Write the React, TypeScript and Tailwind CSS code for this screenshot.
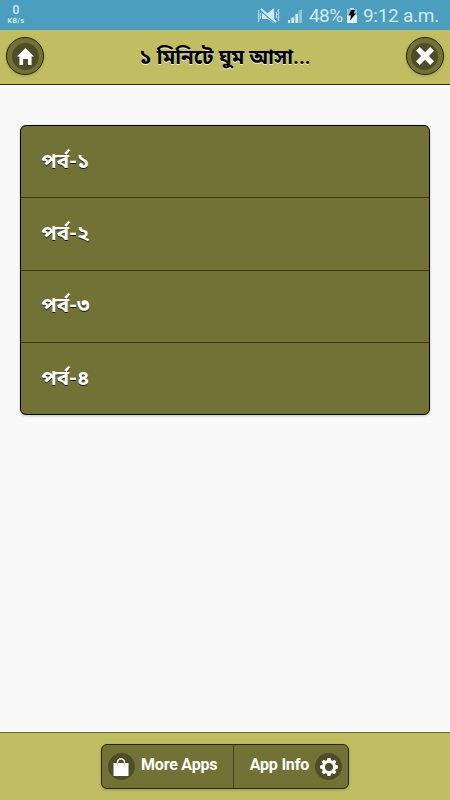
import type { ReactNode } from "react";

const episodes = ["পর্ব-১", "পর্ব-২", "পর্ব-৩", "পর্ব-৪"];
const teeth = [0, 45, 90, 135, 180, 225, 270, 315];

function HomeIcon() {
  return (
    <svg width="17" height="17" viewBox="0 0 14 14" fill="white">
      <path d="M7 0 0 7h2v7h3V9h4v5h3V7h2z" />
    </svg>
  );
}

function CloseIcon() {
  return (
    <svg width="18" height="18" viewBox="0 0 14 14" fill="white">
      <path d="m14 3-3-3-4 4-4-4-3 3 4 4-4 4 3 3 4-4 4 4 3-3-4-4z" />
    </svg>
  );
}

function BagIcon() {
  return (
    <svg className="-ml-px" width="16" height="18" viewBox="0 0 16 18" fill="none">
      <path d="M.5 5h15v13H.5z" fill="white" />
      <path d="M4.5 7.500V4.300a3.500 3.500 0 0 1 7 0v3.200" stroke="#bdbca6" strokeWidth="1" />
      <path d="M4.5 5V4.300a3.500 3.500 0 0 1 7 0V5" stroke="white" strokeWidth="1.2" />
    </svg>
  );
}

function GearIcon() {
  return (
    <svg width="18" height="18" viewBox="-9 -9 18 18">
      {teeth.map((angle) => (
        <path key={angle} d="M-2.2-6-1.5-8.9h3L2.2-6z" fill="white" transform={`rotate(${angle})`} />
      ))}
      <circle r="5.5" fill="none" stroke="white" strokeWidth="3" />
    </svg>
  );
}

function StatusBar() {
  return (
    <div className="flex h-[30px] items-center justify-between bg-[#4b9ebd] pl-[7px] pr-[11px] text-[#d2e9f2]">
      <div className="flex w-[18px] flex-col items-center">
        <span className="text-[12px] font-medium leading-[11px]">0</span>
        <span className="mt-px text-[7px] font-bold leading-[8px] tracking-[0.5px]">KB/s</span>
      </div>
      <div className="flex items-center">
        <svg className="mt-px" width="24" height="16" viewBox="0 0 24 16" fill="none" stroke="currentColor">
          <path d="M5 5h6l6-5v15l-6-4H5z" fill="currentColor" stroke="none" />
          <path d="M3 2.500l16 13" stroke="#4b9ebd" strokeWidth="1.5" />
          <path d="M4 1l15 13" strokeWidth="1.800" />
          <path d="M1 2l1 2-1 2 1 2-1 2 1 2-1 2M3.500 5l-.500 2 .500 2-.500 2M22 1l-1 2 1 2-1 2 1 2-1 2 1 2M19 4l1 2-1 2 1 2" strokeWidth="1" />
        </svg>
        <svg className="ml-[6px]" width="17" height="15" viewBox="0 0 17 15" fill="currentColor">
          <path d="M0 15 15 0v15z" opacity=".25" />
          <path d="M1 12h2v3H1zM4.500 9.500h2.500V15H4.500zM8.500 6H11v9H8.500z" />
          <path d="M12.500 2H15v13h-2.500z" opacity=".4" />
        </svg>
        <span className="ml-[5px] w-[36px] whitespace-nowrap pt-px text-[19px] leading-[30px] tracking-[-0.5px]">48%</span>
        <svg className="ml-[2px]" width="10" height="15" viewBox="0 0 10 15">
          <path d="M3 0h4v1h3v14H0V1h3z" fill="#e2f1f7" />
          <path d="M0 1h10v6H0z" fill="#8dc2d6" />
          <path d="M4 2h4L6.500 5.500H9l-6 7 1-5H1.500z" fill="black" />
        </svg>
        <span className="ml-[6px] whitespace-nowrap pt-px text-[19px] leading-[30px] tracking-[-0.25px]">9:12 a.m.</span>
      </div>
    </div>
  );
}

function RoundButton({ label, children }: { label: string; children: ReactNode }) {
  return (
    <button
      aria-label={label}
      className="flex size-[38px] shrink-0 items-center justify-center rounded-full border border-[#28260f] bg-[#737236] shadow-[0_1px_3px_rgba(0,0,0,0.2)]"
    >
      <span className="flex size-[27px] items-center justify-center rounded-full bg-[#4f4d27]">{children}</span>
    </button>
  );
}

export default function App() {
  return (
    <main className="flex h-[800px] w-[450px] flex-col overflow-hidden bg-[#f9f9f9] font-[Roboto,'Noto_Sans_Bengali','Noto_Sans',sans-serif]">
      <StatusBar />
      <header className="flex h-[55px] items-start justify-between border-b border-[#302a09] bg-[#c1bd63] px-[6px] pt-[7px]">
        <RoundButton label="Home">
          <HomeIcon />
        </RoundButton>
        <h1 className="flex h-[38px] items-center whitespace-nowrap pt-[2px] text-[20.500px] font-bold text-black [text-shadow:0_1px_0_#eee]">
          ১ মিনিটে ঘুম আসা...
        </h1>
        <RoundButton label="Close">
          <CloseIcon />
        </RoundButton>
      </header>

      <div className="flex-1 px-5 pt-10">
        <ul className="h-[290px] overflow-hidden rounded-[6px] border border-black bg-[#737236] shadow-[0_1px_3px_rgba(0,0,0,0.2)]">
          {episodes.map((episode) => (
            <li
              key={episode}
              className="flex h-[72.3px] items-center border-b border-[#3c3a18] pb-px pl-[20.500px] text-[20.500px] font-bold text-white [text-shadow:0_1px_0_#111] last:border-b-0"
            >
              {episode}
            </li>
          ))}
        </ul>
      </div>

      <footer className="flex h-[68px] justify-center border-t border-[#6d6a2f] bg-[#c1bd63] pt-[11px]">
        <div className="flex h-[45px] w-[248px] overflow-hidden rounded-[6px] border border-[#29270f] bg-[#737236] text-[16px] font-bold tracking-[-0.2px] text-white shadow-[0_1px_3px_rgba(0,0,0,0.2)] [text-shadow:0_1px_0_#111]">
          <button className="flex w-[132px] items-center border-r border-[#45431e] pl-[6px]">
            <span className="flex size-[27px] shrink-0 items-center justify-center rounded-full bg-[#4f4d27]">
              <BagIcon />
            </span>
            <span className="ml-[6px] whitespace-nowrap pb-[3px]">More Apps</span>
          </button>
          <button className="flex flex-1 items-center justify-end pr-[6px]">
            <span className="mr-[6px] whitespace-nowrap pb-[3px]">App Info</span>
            <span className="flex size-[27px] shrink-0 items-center justify-center rounded-full bg-[#4f4d27]">
              <GearIcon />
            </span>
          </button>
        </div>
      </footer>
    </main>
  );
}
